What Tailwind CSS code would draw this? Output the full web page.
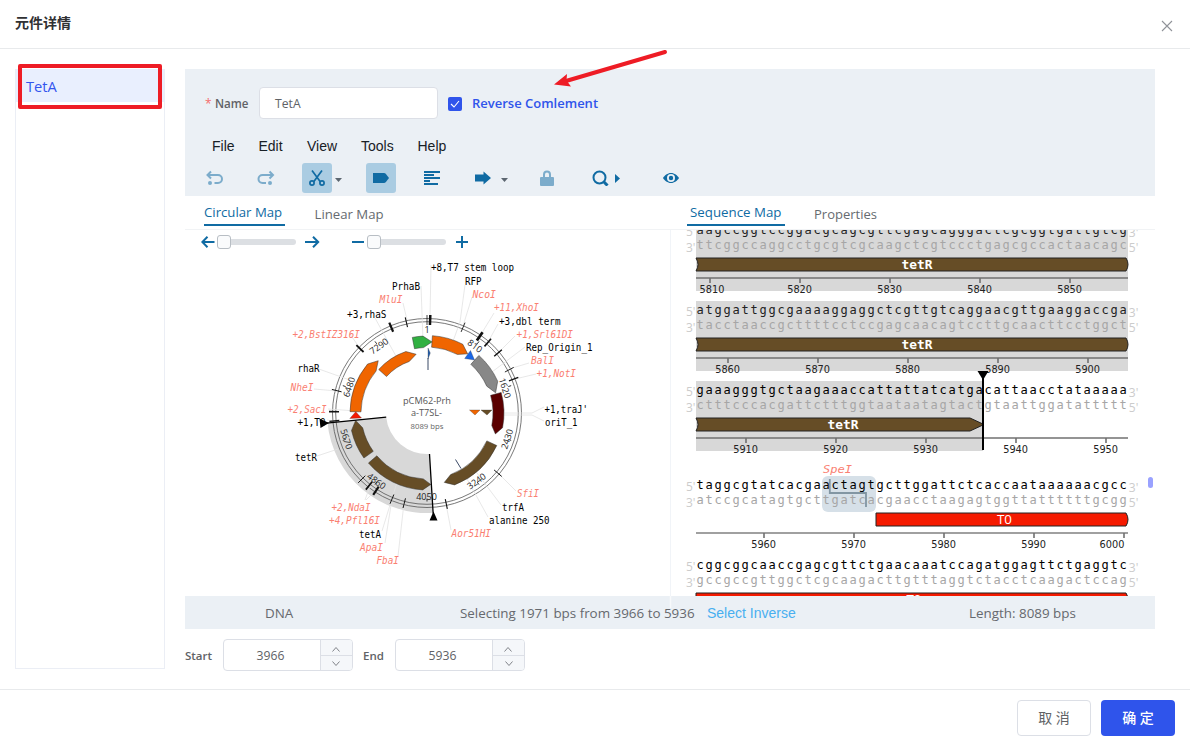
<!DOCTYPE html>
<html lang="zh">
<head>
<meta charset="utf-8">
<title>元件详情</title>
<script src="https://cdn.jsdelivr.net/npm/@tailwindcss/browser@4"></script>
</head>
<body class="relative w-[1190px] h-[752px] overflow-hidden bg-white flex flex-col font-['Open_Sans','Noto_Sans_CJK_SC',sans-serif] text-[#606266]">
<header class="h-[49px] shrink-0 border-b border-[#e8eaec] flex items-center justify-between pl-[15px] pr-[17px]">
  <h1 class="text-[14px] leading-5 font-bold text-[#303133] -mt-0.5">元件详情</h1>
  <svg class="mt-1" width="12" height="12" viewBox="0 0 12 12" fill="none" stroke="#909399" stroke-width="1.1"><path d="M1 1l10 10M11 1L1 11"/></svg>
</header>

<main class="h-[640px] shrink-0 flex pl-[15px] pr-[35px] pt-5 gap-5">
  <aside class="w-[150px] h-[600px] border border-t-0 border-[#ebeef5]">
    <div class="h-[33px] bg-[#e9effe] text-[#3355ee] text-[14.7px] leading-[35px] pl-[10px]">TetA</div>
  </aside>

  <section class="w-[970px] flex flex-col">
    <div class="h-[127px] bg-[#ebf0f5] flex flex-col">
      <div class="flex items-center h-8 mt-[18px] pl-5">
        <span class="text-[#f56c6c] text-[12px] w-[10px] pt-0.5">*</span>
        <label class="text-[11.6px] font-semibold w-[44px] pt-0.5">Name</label>
        <div class="w-[179px] h-8 bg-white border border-[#dcdfe6] rounded text-[12.2px] leading-[31px] pl-[15px]">TetA</div>
        <span class="ml-[10px] mt-px size-[14px] rounded-[2px] bg-[#2f54eb] flex items-center justify-center"><svg width="10" height="8" viewBox="0 0 10 8" fill="none" stroke="#fff" stroke-width="1.1"><path d="M1 4l3 3 5-6"/></svg></span>
        <span class="ml-[10px] pt-0.5 text-[13px] font-semibold text-[#2f54eb]">Reverse Comlement</span>
      </div>
      <nav class="flex items-center h-[30px] mt-3 pl-[27px] font-['Liberation_Sans',sans-serif] text-[14px] text-[#182026]">
        <span class="w-[46.500px]">File</span><span class="w-[48.500px]">Edit</span><span class="w-[54px]">View</span><span class="w-[56.500px]">Tools</span><span>Help</span>
      </nav>
      <div class="flex items-center h-[30px] mt-0.5 pl-[21px] text-[#106ba3]">
        <svg class="opacity-50" width="18" height="16" viewBox="0 0 18 16" fill="none" stroke="currentColor" stroke-width="2"><path d="M1.500 5H12a4 4 0 010 8H8.500M5 1.500L1.500 5L5 8.500"/><circle cx="4" cy="13" r="2" fill="currentColor" stroke="none"/></svg>
        <svg class="opacity-50 ml-[33px]" width="18" height="16" viewBox="0 0 18 16" fill="none" stroke="currentColor" stroke-width="2"><path d="M15.500 5H5.500a4 4 0 000 8H9M12.500 1.500L16 5l-3.500 3.500"/><circle cx="13" cy="13" r="2" fill="currentColor" stroke="none"/></svg>
        <span class="ml-[27px] size-[30px] rounded-[3px] bg-[#aacce2] flex items-center justify-center">
          <svg width="16" height="16" viewBox="0 0 16 16" fill="none" stroke="currentColor" stroke-width="1.700"><path d="M3 .5L11.500 12M13 .5L4.500 12"/><circle cx="3" cy="13" r="2.100"/><circle cx="13" cy="13" r="2.100"/></svg></span>
        <svg class="ml-[3px] mt-1" width="7" height="4" viewBox="0 0 7 4" fill="#5c6670"><path d="M0 0h7L3.500 4z"/></svg>
        <span class="ml-6 size-[30px] rounded-[3px] bg-[#aacce2] flex items-center justify-center">
          <svg width="16" height="10" viewBox="0 0 16 10" fill="currentColor"><path d="M0 0h11q1 0 1.700.8L16 5l-3.300 4.200q-.7.8-1.700.8H0z"/></svg></span>
        <svg class="ml-7" width="16" height="14" viewBox="0 0 16 14" fill="currentColor"><path d="M0 0h16v2H0zM0 3h10v2H0zM0 6h16v2H0zM0 9h6v2H0zM0 12h14v2H0z"/></svg>
        <svg class="ml-[35px]" width="16" height="14" viewBox="0 0 16 14" fill="currentColor"><path d="M0 3.500h8.500V.5L16 7 8.500 13.500v-3H0z"/></svg>
        <svg class="ml-[10px] mt-1" width="7" height="4" viewBox="0 0 7 4" fill="#5c6670"><path d="M0 0h7L3.500 4z"/></svg>
        <svg class="ml-[32px] opacity-50" width="14" height="16" viewBox="0 0 14 16" fill="currentColor"><path d="M1 7h2V4.500a4 4 0 018 0V7h2q1 0 1 1v7q0 1-1 1H1q-1 0-1-1V8q0-1 1-1zm4 0h4V4.500a2 2 0 00-4 0z"/></svg>
        <svg class="ml-[38px]" width="17" height="16" viewBox="0 0 17 16" fill="none" stroke="currentColor" stroke-width="2"><circle cx="7.500" cy="7.500" r="6"/><path stroke-width="3" d="M11.500 11.500l4 4"/></svg>
        <svg class="ml-1.5" width="5" height="9" viewBox="0 0 5 9" fill="currentColor"><path d="M0 0l5 4.500L0 9z"/></svg>
        <svg class="ml-[43px]" width="16" height="10" viewBox="0 0 16 10"><path fill="currentColor" fill-rule="evenodd" d="M8 0c3.500 0 6.500 2.500 8 5-1.500 2.500-4.500 5-8 5S1.500 7.500 0 5c1.500-2.500 4.500-5 8-5zm0 1a4 4 0 100 8 4 4 0 000-8zm0 1.800a2.200 2.200 0 110 4.400 2.200 2.200 0 010-4.400z"/></svg>
      </div>
    </div>

    <div class="h-[400px] flex">
      <div class="w-[485px] flex flex-col">
        <div class="h-[34px] border-b border-[#f1f3f5] flex text-[13.2px] pl-[19px]">
          <span class="h-[30px] border-b-2 border-[#106ba3] text-[#106ba3] leading-[33px] w-[81px] whitespace-nowrap">Circular Map</span>
          <span class="ml-[29.500px] leading-[37px] text-[#666b70]">Linear Map</span>
        </div>
        <div class="h-[366px]">
          <div class="flex items-center h-6 pl-4 text-[#106ba3]">
            <svg width="14" height="12" viewBox="0 0 14 12" fill="none" stroke="currentColor" stroke-width="2"><path d="M13.500 6H1.500M6.500 .8L1.300 6l5.200 5.200"/></svg>
            <span class="ml-[2px] size-[14px] rounded-[3px] border border-[#b8bec4] bg-[#fafbfc]"></span>
            <span class="w-[65px] h-1.5 rounded-r-full bg-[#dcdfe3]"></span>
            <svg class="ml-[9px]" width="15" height="12" viewBox="0 0 15 12" fill="none" stroke="currentColor" stroke-width="2"><path d="M0 6h13M8 .8L13.200 6 8 11.200"/></svg>
            <svg class="ml-8" width="12" height="2" viewBox="0 0 12 2" fill="currentColor"><path d="M0 0h12v2H0z"/></svg>
            <span class="ml-[3px] size-[14px] rounded-[3px] border border-[#b8bec4] bg-[#fafbfc]"></span>
            <span class="w-[65px] h-1.5 rounded-r-full bg-[#dcdfe3]"></span>
            <svg class="ml-[10px]" width="12" height="12" viewBox="0 0 12 12" fill="currentColor"><path d="M5 0h2v5h5v2H7v5H5V7H0V5h5z"/></svg>
          </div>
          <svg id="ring" class="block" width="485" height="342" viewBox="185 254 485 342"></svg>
        </div>
      </div>
      <div class="w-[485px] flex flex-col">
        <div class="h-[34px] border-b border-[#f1f3f5] flex text-[13.3px] pl-[17px]">
          <span class="h-[30px] border-b-2 border-[#106ba3] text-[#106ba3] leading-[33px] w-[98px] pl-[3px] whitespace-nowrap">Sequence Map</span>
          <span class="ml-[29px] text-[13px] leading-[37px] text-[#666b70]">Properties</span>
        </div>
        <svg id="seq" class="block" width="485" height="366" viewBox="670 230 485 366"></svg>
      </div>
    </div>

    <div class="h-[33px] bg-[#ebf0f5] flex items-center text-[13.4px] text-[#66696e] pt-px">
      <span class="w-[275px] pl-20">DNA</span>
      <span class="w-[247px] whitespace-nowrap">Selecting 1971 bps from 3966 to 5936</span>
      <span class="w-[262px] font-['Liberation_Sans',sans-serif] text-[14px] text-[#48aff0]">Select Inverse</span>
      <span>Length: 8089 bps</span>
    </div>

    <div class="flex items-center h-8 mt-[10px] text-[12.2px]">
      <span class="w-[38px] pt-0.5 text-[11.500px] font-semibold">Start</span>
      <div class="w-[130px] h-8 border border-[#dcdfe6] rounded flex overflow-hidden">
        <span class="flex-1 text-center leading-[31px] pr-[3px]">3966</span>
        <span class="w-8 border-l border-[#dcdfe6] bg-[#f5f7fa] flex flex-col">
          <span class="h-[15px] pt-[3px] pr-px flex items-center justify-center"><svg width="8" height="5" viewBox="0 0 8 5" fill="none" stroke="#808389"><path d="M.5 4.500l3.500-4 3.500 4"/></svg></span>
          <span class="flex-1 pr-px border-t border-[#dcdfe6] flex items-center justify-center"><svg width="8" height="5" viewBox="0 0 8 5" fill="none" stroke="#808389"><path d="M.5.5l3.500 4 3.500-4"/></svg></span>
        </span>
      </div>
      <span class="ml-[10px] w-8 pt-0.5 text-[11.500px] font-semibold">End</span>
      <div class="w-[130px] h-8 border border-[#dcdfe6] rounded flex overflow-hidden">
        <span class="flex-1 text-center leading-[31px] pr-[3px]">5936</span>
        <span class="w-8 border-l border-[#dcdfe6] bg-[#f5f7fa] flex flex-col">
          <span class="h-[15px] pt-[3px] pr-px flex items-center justify-center"><svg width="8" height="5" viewBox="0 0 8 5" fill="none" stroke="#808389"><path d="M.5 4.500l3.500-4 3.500 4"/></svg></span>
          <span class="flex-1 border-t border-[#dcdfe6] flex items-center justify-center"><svg width="8" height="5" viewBox="0 0 8 5" fill="none" stroke="#808389"><path d="M.5.5l3.500 4 3.500-4"/></svg></span>
        </span>
      </div>
    </div>
  </section>
</main>

<footer class="h-[63px] shrink-0 border-t border-[#e8eaec] flex justify-end gap-[10px] pt-[10px] pr-[15px] text-[14px]">
  <button class="w-[74px] h-9 border border-[#dcdfe6] rounded bg-white pb-px">取 消</button>
  <button class="w-[74px] h-9 rounded bg-[#2f54eb] text-white font-medium pb-px">确 定</button>
</footer>

<svg class="absolute left-0 top-0 pointer-events-none" width="1190" height="752" viewBox="0 0 1190 752">
  <rect x="20" y="66" width="140" height="41" fill="none" stroke="#ee1c25" stroke-width="4" stroke-linejoin="round"/>
  <path d="M665 52L566 81" stroke="#ee1c25" stroke-width="4" stroke-linecap="round"/>
  <path d="M554 84.500L567 74l-.500 6.500 4.500 6z" fill="#ee1c25"/>
  <path d="M670.500 596v12" stroke="#f7f9fb" stroke-width="1.500"/>
</svg>

<script>
const NS = 'http://www.w3.org/2000/svg';
const ring = document.getElementById('ring'), seq = document.getElementById('seq');
function el(parent, tag, attrs, text) {
  const e = document.createElementNS(NS, tag);
  for (const k in attrs) e.setAttribute(k, attrs[k]);
  if (text !== undefined) e.textContent = text;
  parent.appendChild(e);
  return e;
}
const MONO = '"DejaVu Sans Mono", monospace', SANS = '"Open Sans", sans-serif', WIDE = '"DejaVu Sans", sans-serif';
const CX = 427, CY = 413;
const pt = (r, a) => [CX + r * Math.sin(a * Math.PI / 180), CY - r * Math.cos(a * Math.PI / 180)].map(v => v.toFixed(2)).join(' ');

// Circular map: selection and backbone
el(ring, 'path', {d: `M${pt(41,176.5)}L${pt(100,176.5)}A100 100 0 0 1 ${pt(100,264.2)}L${pt(41,264.2)}A41 41 0 0 0 ${pt(41,176.5)}Z`, fill: '#d8d8d8'});
for (const r of [94.5, 91.3]) el(ring, 'circle', {cx: CX, cy: CY, r, fill: 'none', stroke: '#555', 'stroke-width': .8});

// Leader lines
[[431,265,430,318],[421,286,423,341],[403,303,407,320],[375,318,397,358],[350,334,359,347],[316,368,361,384],[314,389,337,391],[328,409,356,411],[327,420,333,421],[317,456,338,449],
 [366,500,376,490],[365,500,370,486],[382,531,398,479],[385,543,392,499],[398,556,404,503],[451,530,446,504],[488,517,461,468],[501,505,474,469],[516,491,498,473],
 [544,407,532,413],[532,413,504,413],[544,421,532,415],[532,415,504,415],[536,374,515,379],[529,363,509,369],[525,347,488,375],[515,336,498,353],[498,324,488,342],[494,313,480,336],[472,297,463,326],[465,285,460,322],[460,322,452,344]]
 .forEach(([x1,y1,x2,y2]) => el(ring, 'line', {x1,y1,x2,y2, stroke: '#e2e2e2', 'stroke-width': .8}));

// Features: start angle, arrow-head base angle, tip angle, inner and outer radius, colour
[[-11,-3,4,65.5,77,'#31b041'],[4,27.5,34.5,66,77.5,'#f06500'],[42,65.8,73.6,65.5,77.5,'#888'],[74.5,101,107,66,77,'#5b0000'],[115,159,166,66,77,'#664d26'],
 [229.5,183.2,177,66,77,'#664d26'],[234.5,257,264.1,66,77.5,'#664d26'],[271,309.5,317,66,77,'#f06500'],[312,341,349.5,54.5,65,'#f06500']]
 .forEach(([s,b,t,ri,ro,c]) => {
   const f = b > s ? 1 : 0;
   el(ring, 'path', {d: `M${pt(ri,s)}L${pt(ro,s)}A${ro} ${ro} 0 0 ${f} ${pt(ro,b)}L${pt((ri+ro)/2,t)}L${pt(ri,b)}A${ri} ${ri} 0 0 ${1-f} ${pt(ri,s)}Z`, fill: c, stroke: '#333', 'stroke-width': .5});
 });
[['470.5,350.5 464.700,358.500 474.500,360','#1a66e6'],['355.700,411.800 349.800,418.500 361.500,418','#f51a00'],['469.500,410 480,410 475,415','#f06500'],['481,410 492,410 487,415','#664d26'],['428,348 428,359 430.300,353','#2560b0']]
 .forEach(([points,fill]) => el(ring, 'polygon', {points, fill, stroke: '#333', 'stroke-width': .3}));
el(ring, 'path', {d: 'M428 358v12M455.500 459.500l5.500 9', stroke: '#3b4a66', 'stroke-width': 1});

// Cut sites on the backbone: a point on the ring and the stroke width
[[430.2,318,2.5],[427,318,.8],[463.3,326.7,.9],[480,336,2.8],[487.7,342.7,1.6],[498,353,1.5],[509.3,369.7,.9],[514.7,378.7,1.3],[391,326.7,2.2],[406.3,322,1.1],[359.7,348.3,1.8],[337,390.7,1],[333.7,411.7,1.6],[333.3,421,1.3],
 [361.7,479.3,1],[369,485.7,1.7],[376,490.7,2.2],[392,499,1],[404.3,503,1],[446.3,504,1.1],[497.7,473,1]]
 .forEach(([x,y,w]) => { const a = Math.atan2(x-CX, CY-y) * 180 / Math.PI; el(ring, 'path', {d: `M${pt(88,a)}L${pt(98,a)}`, stroke: '#111', 'stroke-width': w}); });

// Position scale
[[810,36,475,346,36],[1620,72,505,388,72],[2430,108,507,439,-72],[3240,144,476.5,481,-36],[4050,180,426.5,497,0],[4860,216,376.5,481,36],[5670,252,346.5,439,72],[6480,288,349,387,-72],[7290,324,379,346,-36],[1,0,427,330,0]]
 .forEach(([n,a,x,y,rot]) => {
   if (n > 1) el(ring, 'path', {d: `M${pt(85.5,a)}L${pt(88.5,a)}`, stroke: '#333', 'stroke-width': 1});
   el(ring, 'text', {x, y: y + 3.3, transform: `rotate(${rot} ${x} ${y})`, 'text-anchor': 'middle', 'font-size': 9, 'font-family': SANS, fill: '#222'}, n);
 });

// Selection edges
el(ring, 'path', {d: `M${pt(41,176.5)}L${pt(101,176.5)}M${pt(41,264.2)}L${pt(101,264.2)}`, stroke: '#000', 'stroke-width': 1.3});
el(ring, 'path', {d: 'M433.500 511.500l-4 9h8zM329 423l-9.500-4.500 1 9.500z', fill: '#000'});

[['+8,T7 stem loop',431,271,83,0],['RFP',465,285,16.5,0],['NcoI',472.5,298,23.5,1],['PrhaB',392,290,28,0],['MluI',379.5,303,23,1],['+3,rhaS',347,317.5,39.5,0],['+2,BstIZ316I',292.5,338,67.5,1],['rhaR',297.5,372,22,0],['NheI',290.5,391,23,1],['+2,SacI',287.5,413,39,1],['+1,T0',297.5,426,28,0],['tetR',295,461,22,0],
 ['+2,NdaI',331.5,511,39,1],['+4,Pfl16I',329,524,51,1],['tetA',359,538,22,0],['ApaI',360,551,23,1],['FbaI',376.5,564,22.5,1],['Aor51HI',451.5,537,39.5,1],['alanine 250',489,524,60.5,0],['trfA',502,511,22,0],['SfiI',517,497,22,1],['oriT_1',545,426,32.5,0],["+1,traJ'",544.5,413,43.5,0],
 ['+1,NotI',536.5,377,39.5,1],['BalI',531,364,23,1],['Rep_Origin_1',526,351,66.5,0],['+1,Srl61DI',516.5,337.5,56.5,1],['+3,dbl term',499,324.5,61.5,0],['+11,XhoI',494,311,45,1]]
 .forEach(([t,x,y,w,cut]) => el(ring, 'text', {x, y, textLength: w, lengthAdjust: 'spacingAndGlyphs', 'font-size': 9.7, 'font-family': MONO, 'font-style': cut ? 'italic' : 'normal', fill: cut ? '#fa8072' : '#000'}, t));
el(ring, 'text', {x: 427, y: 404, 'text-anchor': 'middle', textLength: 48, lengthAdjust: 'spacingAndGlyphs', 'font-size': 9.5, 'font-family': SANS, fill: '#555'}, 'pCM62-Prh');
el(ring, 'text', {x: 426.5, y: 416, 'text-anchor': 'middle', textLength: 31, lengthAdjust: 'spacingAndGlyphs', 'font-size': 9.5, 'font-family': SANS, fill: '#555'}, 'a-T7SL-');
el(ring, 'text', {x: 427, y: 429, 'text-anchor': 'middle', textLength: 33, lengthAdjust: 'spacingAndGlyphs', 'font-size': 7.6, 'font-family': SANS, fill: '#666'}, '8089 bps');

// Sequence map
const pair = {a: 't', t: 'a', g: 'c', c: 'g'};
const rows = [
  {y: 234, s: 'aagccggtccggacgcagcgttcgagcagggactcgcggtgattgtcg', from: 5810, x0: 710, sel: 432},
  {y: 314, s: 'atggattggcgaaaaggaggctcgttgtcaggaacgttgaaggaccga', from: 5860, x0: 728, sel: 432},
  {y: 394, s: 'gaaagggtgctaagaaaccattattatcatgacattaacctataaaaa', from: 5910, x0: 746, sel: 287},
  {y: 489, s: 'taggcgtatcacgaactagtgcttggattctcaccaataaaaaacgcc', from: 5960, x0: 764, sel: 0},
  {y: 569, s: 'cggcggcaaccgagcgttctgaacaaatccagatggagttctgaggtc', from: 0, x0: 0, sel: 0}];
const bar = (d, fill) => el(seq, 'path', {d, fill, stroke: '#222', 'stroke-width': 1});
el(seq, 'path', {d: 'M670.500 230v366', stroke: '#f1f4f8'});
rows.forEach((r, i) => {
  const y = r.y;
  if (r.sel) el(seq, 'rect', {x: 696, y: y - 13, width: r.sel, height: 70, fill: '#d8d8d8'});
  if (i === 3) el(seq, 'rect', {x: 822, y: 476, width: 54, height: 36, rx: 6, fill: '#d6e0e8'});
  const style = 'letter-spacing:1.776px';
  el(seq, 'text', {x: 696.6, y, 'font-size': 12, 'font-family': MONO, fill: r.sel > 400 ? '#222' : '#000', style}, r.s);
  el(seq, 'text', {x: 696.6, y: y + 15, 'font-size': 12, 'font-family': MONO, fill: '#a6a6a6', style}, [...r.s].map(c => pair[c]).join(''));
  [["5'",686,y+2],["3'",686,y+17.5],["3'",1128.8,y+2.5],["5'",1128.8,y+17.5]].forEach(([t,x,ty]) => el(seq, 'text', {x, y: ty, 'font-size': 12, 'font-family': SANS, fill: '#ccc'}, t));
  const b = y + 24;
  if (i < 2) bar(`M696 ${b}H1126q4 6.500 0 13H696q4-6.500 0-13z`, '#664d26');
  if (i === 2) bar(`M696 ${b}H970L984 ${b+6.5}L970 ${b+13}H696q4-6.500 0-13z`, '#664d26');
  if (i === 3) bar(`M876 ${b}H1126q4 6.500 0 13H876z`, '#f51a00');
  if (i === 4) bar(`M696 ${b}H1126q4 6.500 0 13H696z`, '#f51a00');
  const name = ['tetR','tetR','tetR','T0','T0'][i], nx = [917,917,843,1004.5,914][i];
  el(seq, 'text', {x: nx, y: b + (i === 4 ? 11.3 : 10.7), 'text-anchor': 'middle', 'font-size': 12, 'font-family': i < 3 ? MONO : SANS, 'font-weight': i < 3 ? 700 : 400, textLength: i < 3 ? 31 : 15, lengthAdjust: 'spacingAndGlyphs', fill: '#fff'}, name);
  if (r.from) {
    el(seq, 'path', {d: `M696 ${y+44}H1128`, stroke: r.sel ? '#707070' : '#808080', 'stroke-width': 1.6});
    for (let k = 0; k < 5; k++) {
      const x = r.x0 + 90 * k;
      el(seq, 'path', {d: `M${x} ${y+44}v5`, stroke: '#707070', 'stroke-width': 1.6});
      el(seq, 'text', {x: x === 1124 ? 1112 : x === 710 ? 712 : x - .4, y: y + 59, 'text-anchor': 'middle', textLength: 24.8, lengthAdjust: 'spacingAndGlyphs', 'font-size': 10, 'font-family': WIDE, fill: '#222'}, r.from + 10 * k);
    }
  }
});
el(seq, 'text', {x: 823, y: 472.5, textLength: 29, lengthAdjust: 'spacingAndGlyphs', 'font-size': 11, 'font-family': MONO, 'font-style': 'italic', fill: '#fa8072'}, 'SpeI');
el(seq, 'path', {d: 'M829.800 479v14H866v14', fill: 'none', stroke: '#8296a3', 'stroke-width': 1.8});
el(seq, 'path', {d: 'M983 374v76', stroke: '#000', 'stroke-width': 2});
el(seq, 'path', {d: 'M977.500 371h11l-5.500 9z', fill: '#000'});
el(seq, 'rect', {x: 1148, y: 477, width: 5, height: 11, rx: 2.5, fill: '#9aa2ff'});
</script>
</body>
</html>
